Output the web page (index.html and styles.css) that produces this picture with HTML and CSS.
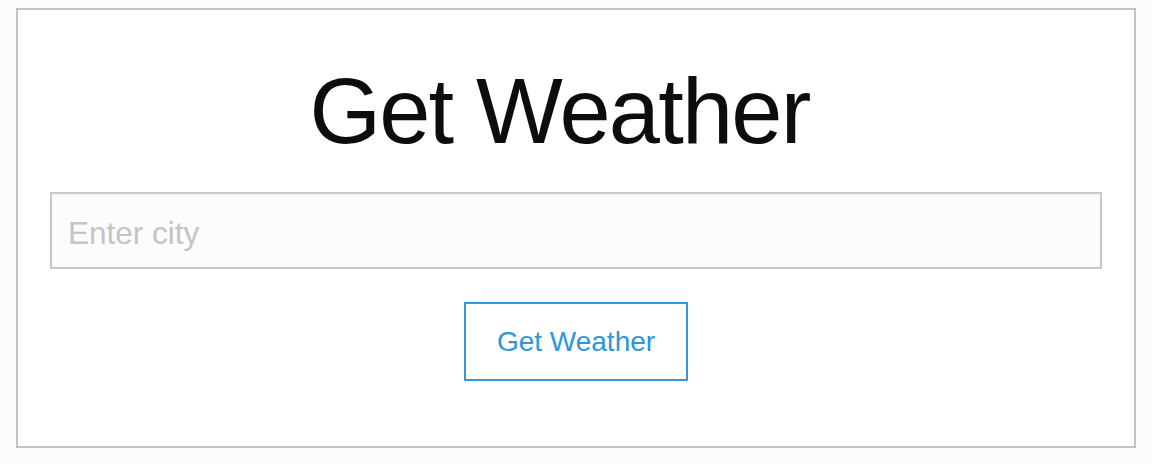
FILE: index.html
```html
<!DOCTYPE html>
<html>
<head>
<meta charset="utf-8">
<link rel="stylesheet" href="styles.css">
</head>
<body>
<main class="card">
  <h1 class="title">Get Weather</h1>
  <input class="city" type="text" placeholder="Enter city">
  <button class="btn" type="button">Get Weather</button>
</main>
</body>
</html>
```
FILE: styles.css
```css
html, body {
  margin: 0;
  padding: 0;
  background: #fcfcfc;
}
body {
  padding: 8px 16px;
  font-family: "Liberation Sans", Arial, sans-serif;
}
.card {
  box-sizing: border-box;
  width: 1120px;
  height: 440px;
  border: 2px solid #c2c2c2;
  background: #ffffff;
  padding: 46px 32px 0;
  display: flex;
  flex-direction: column;
  align-items: center;
}
.title {
  margin: 0;
  padding-right: 33px;
  font-size: 92px;
  line-height: 110px;
  font-weight: 400;
  letter-spacing: -1.8px;
  color: #0d0d0d;
}
.city {
  box-sizing: border-box;
  margin-top: 26px;
  width: 100%;
  height: 77px;
  border: 2px solid #c8c8c8;
  background: #fcfcfc;
  box-shadow: inset 0 1px 3px rgba(0,0,0,0.06);
  padding: 6px 16px 0;
  font-family: "Liberation Sans", Arial, sans-serif;
  font-size: 31.5px;
  color: #333;
  outline: none;
}
.city::placeholder {
  color: #c4c4c4;
}
.btn {
  box-sizing: border-box;
  margin-top: 33px;
  width: 224px;
  height: 79px;
  border: 2px solid #3498db;
  background: #ffffff;
  color: #2d96dc;
  font-family: "Liberation Sans", Arial, sans-serif;
  font-size: 28px;
  padding: 0;
}
```
